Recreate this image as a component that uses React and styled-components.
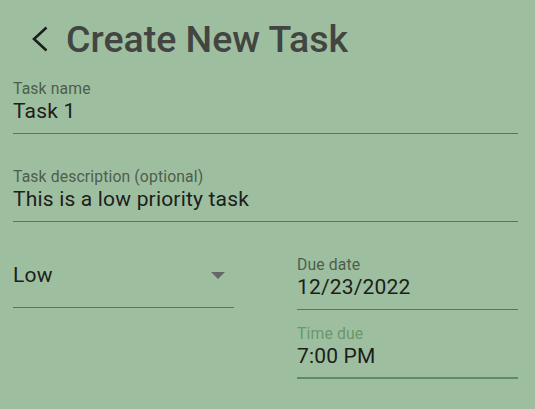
import React from 'react';
import styled, { createGlobalStyle } from 'styled-components';

const GlobalStyle = createGlobalStyle`
    html, body {
        margin: 0;
        padding: 0;
        background: #9ebf9f;
        font-family: Roboto, "Noto Sans", sans-serif;
    }
`;

const Page = styled.div`
    width: 535px;
    height: 409px;
    box-sizing: border-box;
    padding: 17px 17px 0 13px;
    background: #9ebf9f;
    overflow: hidden;
`;

const Header = styled.div`
    display: flex;
    align-items: center;
    height: 44px;
    padding-left: 18px;
    margin-bottom: 19px;
`;

const BackButton = styled.button`
    display: flex;
    align-items: center;
    justify-content: center;
    width: 18px;
    height: 28px;
    padding: 0;
    border: none;
    background: none;
    color: #1c1f1c;
    cursor: pointer;
`;

const Title = styled.h1`
    margin: 0 0 0 17px;
    font-size: 37.5px;
    line-height: 44px;
    font-weight: 500;
    color: #424542;
`;

const Field = styled.div`
    display: flex;
    flex-direction: column;
    padding-bottom: ${p => (p.focused ? '8px' : '9px')};
    border-bottom: ${p => (p.focused ? '2px solid #5e8c61' : '1px solid #5f725f')};
    margin-top: ${p => p.gap || 0}px;
`;

const Label = styled.label`
    font-size: 15.75px;
    line-height: 18px;
    letter-spacing: 0.12px;
    color: ${p => (p.focused ? '#6a976c' : '#4d5d4e')};
`;

const Value = styled.div`
    margin-top: 1px;
    font-size: 21px;
    line-height: 25px;
    letter-spacing: 0.18px;
    color: #1b201b;
`;

const Row = styled.div`
    display: grid;
    grid-template-columns: 1fr 1fr;
    column-gap: 63px;
    margin-top: 34px;
    align-items: start;
`;

const Column = styled.div`
    display: flex;
    flex-direction: column;
`;

const Select = styled.div`
    display: flex;
    align-items: center;
    justify-content: space-between;
    padding: 7px 9px 19px 0;
    border-bottom: 1px solid #5f725f;
    font-size: 21px;
    line-height: 25px;
    letter-spacing: 0.18px;
    color: #1b201b;
`;

function TextField({ label, value, focused, gap }) {
    return (
        <Field focused={focused} gap={gap}>
            <Label focused={focused}>{label}</Label>
            <Value>{value}</Value>
        </Field>
    );
}

function App() {
    return (
        <Page>
            <GlobalStyle />
            <Header>
                <BackButton aria-label="Back">
                    <svg width="18" height="28" viewBox="0 0 18 28">
                        <polyline points="15.5,2.5 3,14 15.5,25.5" fill="none" stroke="currentColor" strokeWidth="2.6" />
                    </svg>
                </BackButton>
                <Title>Create New Task</Title>
            </Header>

            <TextField label="Task name" value="Task 1" />
            <TextField label="Task description (optional)" value="This is a low priority task" gap={34} />

            <Row>
                <Select>
                    <span>Low</span>
                    <svg width="14" height="7" viewBox="0 0 14 7">
                        <polygon points="0,0 14,0 7,7" fill="#656965" />
                    </svg>
                </Select>
                <Column>
                    <TextField label="Due date" value="12/23/2022" />
                    <TextField label="Time due" value="7:00 PM" focused gap={15} />
                </Column>
            </Row>
        </Page>
    );
}

export default App;
